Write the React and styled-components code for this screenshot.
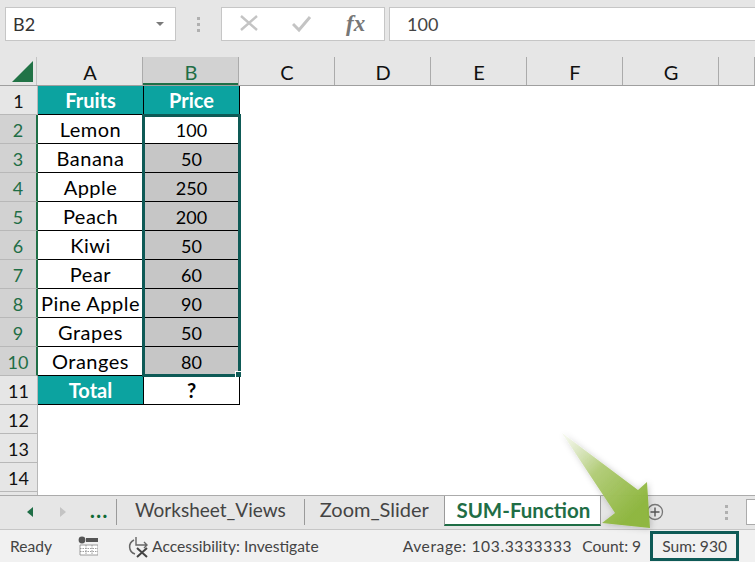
import styled, { createGlobalStyle } from "styled-components";

const GlobalStyle = createGlobalStyle`
    html, body {
        margin: 0;
        padding: 0;
        background: #fff;
        overflow: hidden;
    }
`;

const Window = styled.div`
    position: relative;
    width: 755px;
    height: 562px;
    overflow: hidden;
    display: flex;
    flex-direction: column;
    background: #fff;
    font-family: Lato, "Liberation Sans", sans-serif;
    color: #111;
`;

const FormulaBar = styled.div`
    height: 57px;
    flex: none;
    box-sizing: border-box;
    padding: 7px 0 16px 5px;
    display: flex;
    background: #e6e6e6;
`;

const WhiteBox = styled.div`
    box-sizing: border-box;
    height: 34px;
    background: #fff;
    border: 1px solid #c6c6c6;
    display: flex;
    align-items: center;
`;

const NameBox = styled(WhiteBox)`
    width: 171px;
    padding: 0 11px 0 7px;
    justify-content: space-between;
    font-size: 18px;
    color: #333;
`;

const Caret = styled.span`
    width: 0;
    height: 0;
    border-left: 4px solid transparent;
    border-right: 4px solid transparent;
    border-top: 4px solid #7a7a7a;
`;

const Grip = styled.div`
    width: 45px;
    display: flex;
    flex-direction: column;
    align-items: center;
    justify-content: center;
    gap: 3px;
`;

const Dot = styled.span`
    width: 3px;
    height: 3px;
    background: #b0b0b0;
`;

const FxBox = styled(WhiteBox)`
    width: 164px;
    padding-left: 18px;
    gap: 34px;
`;

const FxLabel = styled.span`
    font-family: "Liberation Serif", serif;
    font-style: italic;
    font-weight: 700;
    font-size: 23px;
    color: #777;
`;

const ValueBox = styled(WhiteBox)`
    flex: 1;
    margin-left: 4px;
    padding-left: 17px;
    border-right: none;
    font-size: 18px;
    color: #444;
`;

const HeaderRow = styled.div`
    display: flex;
    flex: none;
    height: 29px;
    box-sizing: border-box;
    background: #e6e6e6;
    border-bottom: 1px solid #9f9f9f;
`;

const Corner = styled.div`
    width: 38px;
    box-sizing: border-box;
    border-right: 1px solid #c4c4c4;
    display: flex;
    align-items: flex-end;
    justify-content: flex-end;
    padding: 0 3px 3px 0;
`;

const ColHead = styled.div`
    width: ${(p) => p.$w}px;
    flex: none;
    box-sizing: border-box;
    padding: 1px 0 0 1px;
    display: flex;
    align-items: center;
    justify-content: center;
    font-size: 20px;
    border-right: 1px solid #ababab;
    background: ${(p) => (p.$active ? "#d2d2d2" : "transparent")};
    color: ${(p) => (p.$active ? "#1f6e46" : "#111")};
    box-shadow: ${(p) => (p.$active ? "inset 0 -2px 0 #1f6e46" : "none")};
`;

const Body = styled.div`
    height: 409px;
    flex: none;
    position: relative;
    overflow: hidden;
`;

const SheetRow = styled.div`
    display: flex;
    height: 29px;
    box-sizing: border-box;
`;

const RowHead = styled.div`
    width: 38px;
    flex: none;
    box-sizing: border-box;
    padding-top: 1px;
    display: flex;
    align-items: center;
    justify-content: center;
    font-size: 18px;
    background: ${(p) => (p.$active ? "#d2d2d2" : "#e6e6e6")};
    color: ${(p) => (p.$active ? "#1f6e46" : "#111")};
    border-bottom: 1px solid #b8b8b8;
    border-right: ${(p) => (p.$active ? "2px solid #1f6e46" : "1px solid #b8b8b8")};
`;

const Cell = styled.div`
    flex: none;
    width: ${(p) => p.$w}px;
    box-sizing: border-box;
    padding-top: ${(p) => (p.$num ? 1 : 0)}px;
    display: flex;
    align-items: center;
    justify-content: center;
    font-size: ${(p) => (p.$num ? 18 : 20)}px;
    letter-spacing: ${(p) => (p.$loose ? 0.5 : 0)}px;
    white-space: nowrap;
    font-weight: ${(p) => (p.$bold ? 700 : 400)};
    color: ${(p) => (p.$head ? "#fff" : "#000")};
    background: ${(p) => (p.$head ? "#0ca3a0" : p.$sel ? "#c6c6c6" : "#fff")};
    border-right: 1px solid #000;
    border-bottom: 1px solid #000;
`;

const Selection = styled.div`
    position: absolute;
    left: 142px;
    top: 28px;
    width: 99px;
    height: 263px;
    box-sizing: border-box;
    border: 3px solid #0e5a56;
    pointer-events: none;
`;

const Handle = styled.span`
    position: absolute;
    right: -3px;
    bottom: -3px;
    width: 5px;
    height: 5px;
    background: #0e5a56;
    border-left: 1px solid #fff;
    border-top: 1px solid #fff;
`;

const TabBar = styled.div`
    height: 35px;
    flex: none;
    box-sizing: border-box;
    display: flex;
    background: #e6e6e6;
    border-top: 1px solid #ababab;
    border-bottom: 1px solid #c6c6c6;
`;

const TabNav = styled.div`
    width: 116px;
    flex: none;
    box-sizing: border-box;
    display: flex;
    align-items: center;
    padding: 0 0 2px 27px;
    gap: 27px;
`;

const Arrow = styled.span`
    width: 0;
    height: 0;
    border-top: 5px solid transparent;
    border-bottom: 5px solid transparent;
    ${(p) => (p.$left ? "border-right: 6px solid #1f6e46;" : "border-left: 6px solid #c4c4c4;")}
`;

const More = styled.span`
    font-weight: 900;
    font-size: 20px;
    line-height: 18px;
    letter-spacing: 1.5px;
    color: #0f6a34;
    margin-left: -3px;
    margin-top: -4px;
`;

const Tab = styled.div`
    height: 26px;
    margin-top: 3px;
    box-sizing: border-box;
    padding: 0 ${(p) => p.$px}px ${(p) => p.$pb}px;
    display: flex;
    align-items: center;
    font-size: ${(p) => p.$size}px;
    color: #444;
    border-left: 1px solid #9a9a9a;
    white-space: nowrap;
`;

const ActiveTab = styled.div`
    height: 30px;
    width: 157px;
    flex: none;
    box-sizing: border-box;
    padding: 0 0 1px 2px;
    display: flex;
    align-items: center;
    justify-content: center;
    font-size: 20.5px;
    font-weight: 700;
    color: #1f6e46;
    background: #fff;
    border-left: 1px solid #9a9a9a;
    border-right: 1px solid #9a9a9a;
    border-bottom: 2px solid #1f6e46;
    white-space: nowrap;
`;

const AddSheet = styled.div`
    margin: 7px 0 0 45px;
    width: 18px;
    height: 18px;
    display: flex;
    color: #666;
`;

const TabGrip = styled.div`
    margin-left: 61px;
    display: flex;
    flex-direction: column;
    justify-content: center;
    gap: 3px;
`;

const ScrollStub = styled.div`
    margin: 3px 0 0 18px;
    flex: 1;
    height: 24px;
    background: #fff;
    border: 1px solid #ababab;
    border-right: none;
`;

const StatusBar = styled.div`
    flex: 1;
    display: flex;
    align-items: center;
    background: #f1f1f1;
    font-size: 15.6px;
    color: #444;
    padding-left: 10px;
`;

const StatusItem = styled.span`
    margin-left: ${(p) => p.$ml}px;
    white-space: nowrap;
    display: flex;
    align-items: center;
    letter-spacing: ${(p) => p.$track || 0}px;
`;

const SumBox = styled.span`
    box-sizing: border-box;
    margin-left: 9px;
    width: 89px;
    height: 30px;
    display: flex;
    align-items: center;
    justify-content: center;
    border: 3px solid #0e5a56;
    white-space: nowrap;
`;

const Callout = styled.svg`
    position: absolute;
    left: 555px;
    top: 425px;
    pointer-events: none;
`;

const COLUMNS = [
    { name: "B", w: 96, active: true },
    { name: "C", w: 96 },
    { name: "D", w: 96 },
    { name: "E", w: 96 },
    { name: "F", w: 96 },
    { name: "G", w: 96 },
    { name: "", w: 36 },
];

const FRUITS = [
    ["Lemon", "100"],
    ["Banana", "50"],
    ["Apple", "250"],
    ["Peach", "200"],
    ["Kiwi", "50"],
    ["Pear", "60"],
    ["Pine Apple", "90"],
    ["Grapes", "50"],
    ["Oranges", "80"],
];

const App = () => {
    return (
        <Window>
            <GlobalStyle />
            <FormulaBar>
                <NameBox>
                    B2
                    <Caret />
                </NameBox>
                <Grip>
                    <Dot />
                    <Dot />
                    <Dot />
                </Grip>
                <FxBox>
                    <svg width="18" height="18" viewBox="0 0 18 18">
                        <path d="M1 1 L17 15 M17 1 L1 15" stroke="#c4c4c4" strokeWidth="2.4" fill="none" />
                    </svg>
                    <svg width="20" height="18" viewBox="0 0 20 18">
                        <path d="M1 9 L7 15 L18 2" stroke="#c4c4c4" strokeWidth="3" fill="none" />
                    </svg>
                    <FxLabel>fx</FxLabel>
                </FxBox>
                <ValueBox>100</ValueBox>
            </FormulaBar>

            <HeaderRow>
                <Corner>
                    <svg width="21" height="21" viewBox="0 0 21 21">
                        <path d="M21 0 V21 H0 Z" fill="#217346" />
                    </svg>
                </Corner>
                <ColHead $w={106}>A</ColHead>
                {COLUMNS.map((c) => (
                    <ColHead key={c.name} $w={c.w} $active={c.active}>
                        {c.name}
                    </ColHead>
                ))}
            </HeaderRow>

            <Body>
                <SheetRow>
                    <RowHead>1</RowHead>
                    <Cell $w={106} $head $bold>Fruits</Cell>
                    <Cell $w={96} $head $bold>Price</Cell>
                </SheetRow>
                {FRUITS.map(([fruit, price], i) => (
                    <SheetRow key={fruit}>
                        <RowHead $active>{i + 2}</RowHead>
                        <Cell $w={106} $loose>{fruit}</Cell>
                        <Cell $w={96} $num $sel={i > 0}>{price}</Cell>
                    </SheetRow>
                ))}
                <SheetRow>
                    <RowHead>11</RowHead>
                    <Cell $w={106} $head $bold>Total</Cell>
                    <Cell $w={96} $bold>?</Cell>
                </SheetRow>
                {[12, 13, 14, ""].map((n) => (
                    <SheetRow key={n}>
                        <RowHead>{n}</RowHead>
                    </SheetRow>
                ))}
                <Selection>
                    <Handle />
                </Selection>
            </Body>

            <TabBar>
                <TabNav>
                    <Arrow $left />
                    <Arrow />
                    <More>...</More>
                </TabNav>
                <Tab $px={18} $size={19} $pb={5}>Worksheet_Views</Tab>
                <Tab $px={15} $size={20} $pb={6}>Zoom_Slider</Tab>
                <ActiveTab>SUM-Function</ActiveTab>
                <AddSheet>
                    <svg width="18" height="18" viewBox="0 0 18 18">
                        <circle cx="9" cy="9" r="7.5" fill="none" stroke="#777" strokeWidth="1.3" />
                        <path d="M9 4.5 V13.5 M4.5 9 H13.5" stroke="#555" strokeWidth="1.4" />
                    </svg>
                </AddSheet>
                <TabGrip>
                    <Dot />
                    <Dot />
                    <Dot />
                </TabGrip>
                <ScrollStub />
            </TabBar>

            <StatusBar>
                Ready
                <StatusItem $ml={26}>
                    <svg width="20" height="20" viewBox="0 0 20 20">
                        <circle cx="4" cy="4" r="3.4" fill="#555" />
                        <path d="M8 2 H20 V6 H8 Z" fill="#555" />
                        <path d="M2 9 H20 V19 H2 Z" fill="#fff" stroke="#888" strokeWidth="0.8" />
                        <path d="M2 12.5 H20 M2 15.5 H20 M8 9 V19 M14 9 V19" stroke="#888" strokeWidth="0.8" strokeDasharray="1.5 1" />
                    </svg>
                </StatusItem>
                <StatusItem $ml={29}>
                    <svg width="23" height="24" viewBox="0 0 23 24" style={{ marginRight: 2 }}>
                        <path d="M7 6 A7.5 7.5 0 0 0 8 20" fill="none" stroke="#666" strokeWidth="1.5" />
                        <path d="M9 3 V11 H20 M17 8 L20 11 L17 14" fill="none" stroke="#666" strokeWidth="1.4" />
                        <path d="M10 14 L20 23 M20 14 L10 23" stroke="#444" strokeWidth="2" />
                    </svg>
                    Accessibility: Investigate
                </StatusItem>
                <StatusItem $ml={84} $track={0.6}>Average: 103.3333333</StatusItem>
                <StatusItem $ml={10}>Count: 9</StatusItem>
                <SumBox>Sum: 930</SumBox>
            </StatusBar>

            <Callout width="110" height="115" viewBox="0 0 110 115">
                <defs>
                    <linearGradient id="calloutFill" x1="0.05" y1="0.05" x2="0.8" y2="0.85">
                        <stop offset="0" stopColor="#eef4e0" stopOpacity="0.7" />
                        <stop offset="0.45" stopColor="#b3cd7a" />
                        <stop offset="1" stopColor="#8db63c" stopOpacity="0.96" />
                    </linearGradient>
                    <filter id="calloutShadow" x="-20%" y="-20%" width="140%" height="140%">
                        <feDropShadow dx="1" dy="1" stdDeviation="3" floodColor="#000" floodOpacity="0.22" />
                    </filter>
                </defs>
                <path d="M7 8 L83 65 L92 57 L95 103 L47 98 L60 88 Z" fill="url(#calloutFill)" filter="url(#calloutShadow)" />
            </Callout>
        </Window>
    );
};

export default App;
